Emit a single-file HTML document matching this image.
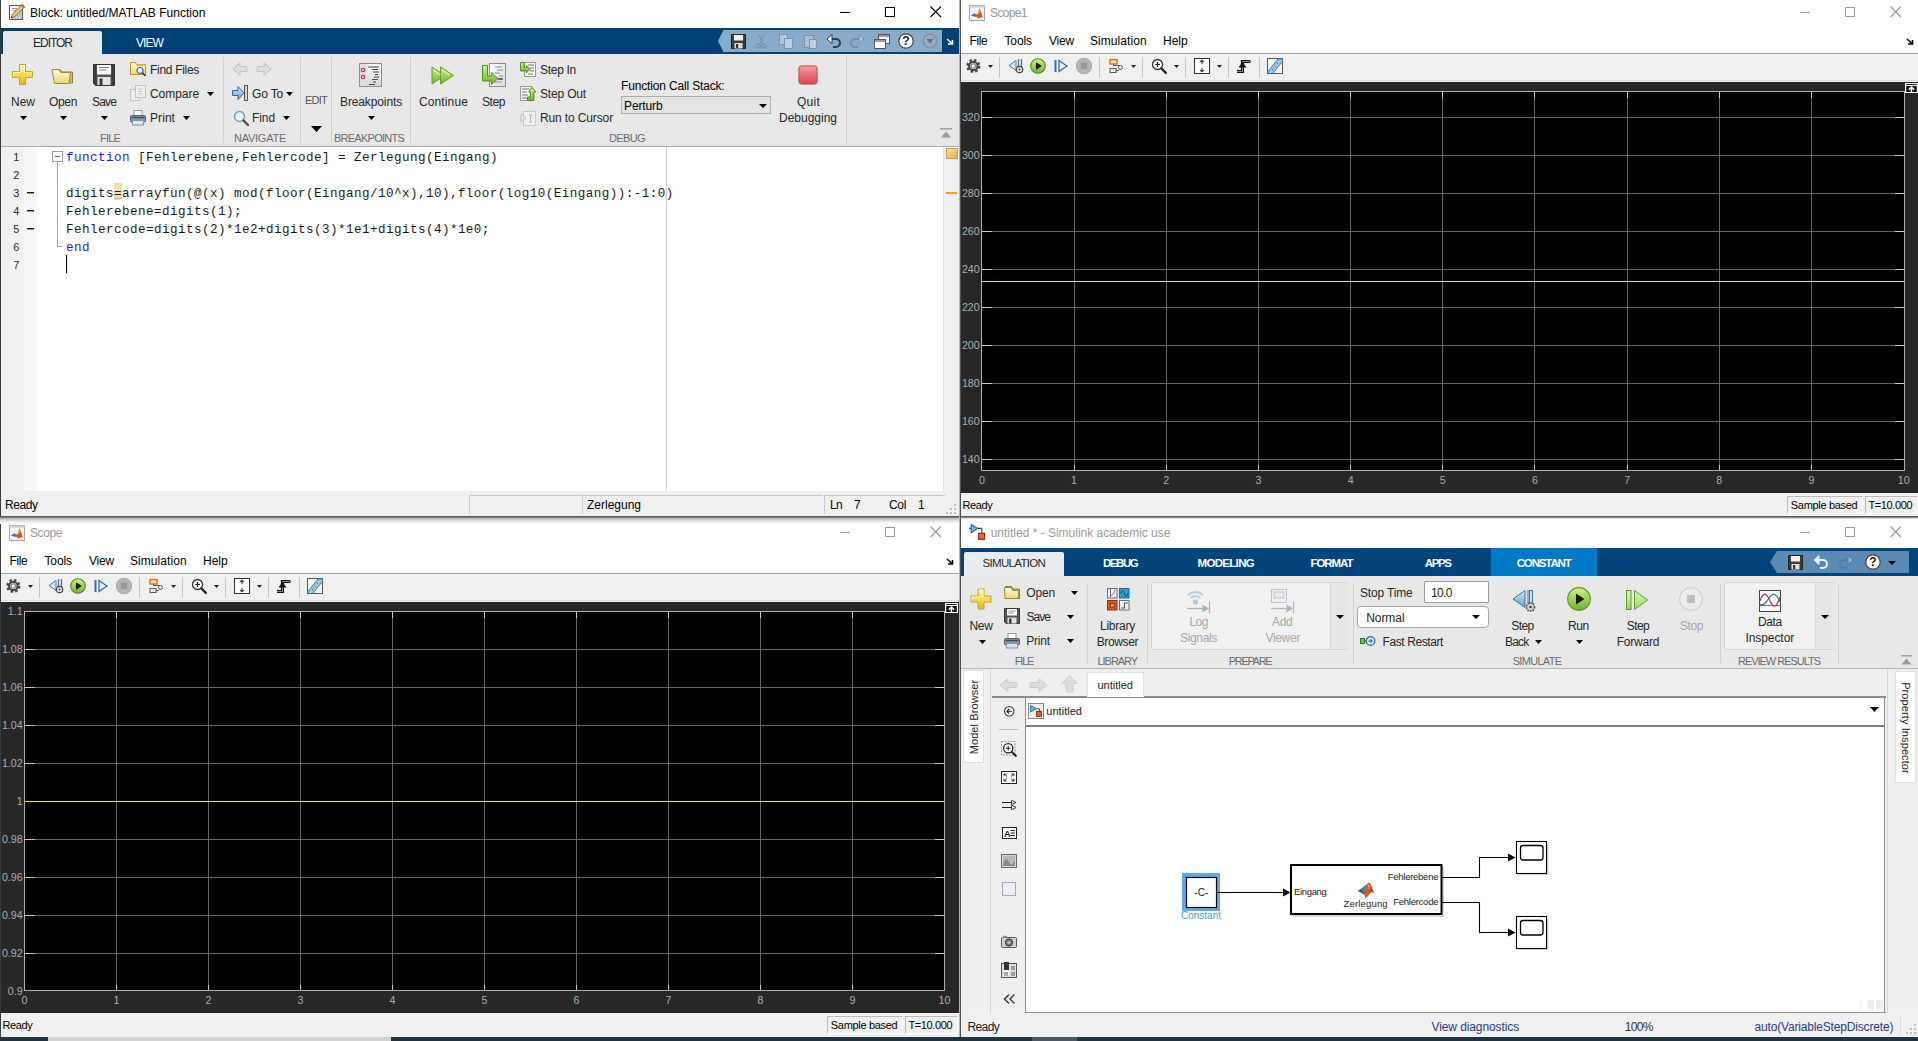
<!DOCTYPE html>
<html><head><meta charset="utf-8"><title>MATLAB / Simulink</title><style>
html,body{margin:0;padding:0;}
body{width:1918px;height:1041px;overflow:hidden;position:relative;background:#fff;font-family:"Liberation Sans",sans-serif;}
.t{position:absolute;white-space:nowrap;}
.r{position:absolute;}
.win{position:absolute;left:0;top:0;width:0;height:0;}
svg{overflow:visible;}
</style></head><body>
<svg width="0" height="0" style="position:absolute"><defs>
<linearGradient id="gY" x1="0" y1="0" x2="0" y2="1"><stop offset="0" stop-color="#fff6b0"/><stop offset="0.55" stop-color="#f7d94a"/><stop offset="1" stop-color="#e0b020"/></linearGradient>
<linearGradient id="gF" x1="0" y1="0" x2="0" y2="1"><stop offset="0" stop-color="#fffbe0"/><stop offset="1" stop-color="#f0d774"/></linearGradient>
<linearGradient id="gG" x1="0" y1="0" x2="0" y2="1"><stop offset="0" stop-color="#d4f08a"/><stop offset="1" stop-color="#6cb52c"/></linearGradient>
<linearGradient id="gR" x1="0" y1="0" x2="0" y2="1"><stop offset="0" stop-color="#f6a0a4"/><stop offset="1" stop-color="#d8484e"/></linearGradient>
<linearGradient id="gB" x1="0" y1="0" x2="0" y2="1"><stop offset="0" stop-color="#d6ecfb"/><stop offset="1" stop-color="#5a9fd4"/></linearGradient>
<linearGradient id="gS" x1="0" y1="0" x2="0" y2="1"><stop offset="0" stop-color="#e6e6e6"/><stop offset="1" stop-color="#bdbdbd"/></linearGradient>
<linearGradient id="gS2" x1="0" y1="0" x2="0" y2="1"><stop offset="0" stop-color="#f8f8f8"/><stop offset="1" stop-color="#d4d4d4"/></linearGradient>
<linearGradient id="gS3" x1="0" y1="0" x2="1" y2="1"><stop offset="0" stop-color="#ffffff"/><stop offset="1" stop-color="#d8dcdf"/></linearGradient>
<linearGradient id="gG2" x1="0" y1="0" x2="0" y2="1"><stop offset="0" stop-color="#e2f6c0"/><stop offset="1" stop-color="#9cd85c"/></linearGradient>
<linearGradient id="gP" x1="0" y1="0" x2="0" y2="1"><stop offset="0" stop-color="#f4f8fb"/><stop offset="1" stop-color="#b9c7d3"/></linearGradient>
</defs></svg>
<section class="win" id="scope-window">
<div class="r" style="left:0px;top:520px;width:959px;height:517px;background:#fff;"></div>
<svg class="r" style="left:9px;top:524.5px;" width="16" height="16" viewBox="0 0 16 16"><rect x=".5" y=".5" width="15" height="15" fill="#f2f4f8" stroke="#9aa3b0"/><rect x=".5" y=".5" width="15" height="2.2" fill="#c9d3e2"/><path d="M2 10.5l3.5-2 2.5 1.5 2.5-6.5c1 1 2.2 5.5 3.5 9.5-1.8-1.2-2.8-1-4 .8-1.5-1.8-3.5-2.8-8-3.3z" fill="#d8511f"/><path d="M8 10l2.5-6.5c.6.8 1 2 1.4 3.2z" fill="#f6a33a"/><path d="M2 10.5l3.5-2 2.5 1.5-1.8 2z" fill="#3e78b8"/></svg>
<div class="t" style="left:30px;top:524.6px;font-size:12px;line-height:17px;color:#999;letter-spacing:-0.41px;">Scope</div>
<div class="r" style="left:840px;top:532px;width:10px;height:1px;background:#999;"></div>
<div class="r" style="left:885px;top:527px;width:10px;height:10px;border:1px solid #999;box-sizing:border-box;"></div>
<svg class="r" style="left:930px;top:526px;" width="12" height="12" viewBox="0 0 12 12"><path d="M.5 .5l10.5 10.5M11 .5L.5 11" stroke="#999" stroke-width="1.1"/></svg>
<div class="t" style="left:9.5px;top:552.6px;font-size:12px;line-height:17px;color:#000;letter-spacing:-0.41px;">File</div>
<div class="t" style="left:44.4px;top:552.6px;font-size:12px;line-height:17px;color:#000;letter-spacing:-0.08px;">Tools</div>
<div class="t" style="left:89px;top:552.6px;font-size:12px;line-height:17px;color:#000;letter-spacing:-0.25px;">View</div>
<div class="t" style="left:130px;top:552.6px;font-size:12px;line-height:17px;color:#000;letter-spacing:0.06px;">Simulation</div>
<div class="t" style="left:203px;top:552.6px;font-size:12px;line-height:17px;color:#000;letter-spacing:-0.02px;">Help</div>
<svg class="r" style="left:946px;top:558px;" width="8" height="7" viewBox="0 0 8 7"><path d="M1 1l5 4.5M6.5 2v4h-4.5" stroke="#000" stroke-width="1.6" fill="none"/></svg>
<div class="r" style="left:1px;top:573px;width:958px;height:1px;background:#a0a0a0;"></div>
<div class="r" style="left:1px;top:574px;width:958px;height:27px;background:#f0f0f0;"></div>
<div class="r" style="left:1px;top:600px;width:958px;height:1px;background:#dcdcdc;"></div>
<div class="r" style="left:1px;top:601px;width:958px;height:1px;background:#fafafa;"></div>
<svg class="r" style="left:6px;top:578px;" width="16" height="16" viewBox="0 0 16 16"><circle cx="7.300" cy="8" r="5.900" fill="none" stroke="#4a4a4a" stroke-width="2.400" stroke-dasharray="2.500 2.130"/><circle cx="7.300" cy="8" r="4.300" fill="#cfcfcf" stroke="#444" stroke-width="2"/><circle cx="7.300" cy="8" r="2.200" fill="#f4f4f4" stroke="#555" stroke-width=".8"/></svg>
<svg class="r" style="left:48px;top:578px;" width="16" height="16" viewBox="0 0 16 16"><path d="M8 2.5l-7 5 7 5z" fill="#d4e6f4" stroke="#4b7aa6"/><path d="M10.5 1v9M13.5 1v9" stroke="#4b7aa6" stroke-width="1.4"/><circle cx="11.5" cy="11.5" r="3.2" fill="#e4e4e4" stroke="#444" stroke-width="1.2"/><circle cx="11.5" cy="11.5" r="1" fill="#444"/></svg>
<svg class="r" style="left:70px;top:578px;" width="16" height="16" viewBox="0 0 16 16"><circle cx="8" cy="8" r="7.3" fill="url(#gG)" stroke="#4b8b1c" stroke-width="1.1"/><path d="M6 4.2l6 3.8-6 3.8z" fill="#1f1f1f"/></svg>
<svg class="r" style="left:93px;top:578px;" width="16" height="16" viewBox="0 0 16 16"><path d="M2.5 2v12" stroke="#2f6fb0" stroke-width="2"/><path d="M6 2.5l8 5.5-8 5.5z" fill="#e6f0fa" stroke="#2f6fb0" stroke-width="1.3"/></svg>
<svg class="r" style="left:116px;top:578px;" width="16" height="16" viewBox="0 0 16 16"><rect x=".5" y=".5" width="15" height="15" rx="6.500" fill="#b5b5b5" stroke="#a8a8a8"/><rect x="4.800" y="4.800" width="6.400" height="6.400" fill="#989898"/></svg>
<svg class="r" style="left:148px;top:578px;" width="16" height="16" viewBox="0 0 16 16"><rect x="2" y="1.5" width="7" height="4.5" fill="#ffd9a8" stroke="#e06a10" stroke-width="1.3"/><rect x="2" y="10.5" width="6" height="4" fill="#fff" stroke="#555"/><path d="M5.5 6v1.5h6.5M8 12.5h3" stroke="#555" fill="none"/><circle cx="12.5" cy="9.5" r="2" fill="#fff" stroke="#555"/></svg>
<svg class="r" style="left:191px;top:578px;" width="16" height="16" viewBox="0 0 16 16"><circle cx="6.5" cy="6.5" r="5" fill="#fff" stroke="#333" stroke-width="1.3"/><path d="M4 6.5h5M6.5 4v5" stroke="#222" stroke-width="1.2"/><path d="M10.5 10.5l4.3 4.3" stroke="#222" stroke-width="2.4" stroke-linecap="round"/></svg>
<svg class="r" style="left:234px;top:578px;" width="16" height="16" viewBox="0 0 16 16"><rect x=".5" y=".5" width="15" height="15" fill="#fff" stroke="#333"/><path d="M8 2.2v4M6 4.2l2-2 2 2M8 13.8v-4M6 11.8l2 2 2-2" stroke="#333" fill="none" stroke-width="1.1"/></svg>
<svg class="r" style="left:276px;top:578px;" width="16" height="16" viewBox="0 0 16 16"><path d="M1 13.500h5.500v-10h8" fill="none" stroke="#111" stroke-width="3.200"/><path d="M1 13.500h5.500v-10h8" fill="none" stroke="#8e8e8e" stroke-width="1"/><path d="M2.500 9.500l4-5.500 4 5.500z" fill="#111"/></svg>
<svg class="r" style="left:307px;top:578px;" width="16" height="16" viewBox="0 0 16 16"><rect x=".5" y=".5" width="15" height="15" fill="#f4f4f4" stroke="#555"/><path d="M1 13.5l10-12.5h4.5v2.5l-10 12h-4.5z" fill="#9ccbe8" stroke="#3a78a8"/><path d="M5 11l1.2 1M7.5 8l1.2 1M10 5l1.2 1" stroke="#2b5f88"/></svg>
<svg class="r" style="left:28px;top:585px;" width="5" height="3" viewBox="0 0 5 3"><path d="M0 0H5L2.5 3Z" fill="#222"/></svg>
<svg class="r" style="left:171px;top:585px;" width="5" height="3" viewBox="0 0 5 3"><path d="M0 0H5L2.5 3Z" fill="#222"/></svg>
<svg class="r" style="left:214px;top:585px;" width="5" height="3" viewBox="0 0 5 3"><path d="M0 0H5L2.5 3Z" fill="#222"/></svg>
<svg class="r" style="left:257px;top:585px;" width="5" height="3" viewBox="0 0 5 3"><path d="M0 0H5L2.5 3Z" fill="#222"/></svg>
<div class="r" style="left:39px;top:577px;width:1px;height:21px;background:#c4c4c4;"></div>
<div class="r" style="left:139px;top:577px;width:1px;height:21px;background:#c4c4c4;"></div>
<div class="r" style="left:182px;top:577px;width:1px;height:21px;background:#c4c4c4;"></div>
<div class="r" style="left:225px;top:577px;width:1px;height:21px;background:#c4c4c4;"></div>
<div class="r" style="left:268px;top:577px;width:1px;height:21px;background:#c4c4c4;"></div>
<div class="r" style="left:299px;top:577px;width:1px;height:21px;background:#c4c4c4;"></div>
<div class="r" style="left:1px;top:602px;width:958px;height:411px;background:#272727;"></div>
<svg class="r" style="left:0;top:0" width="1918" height="1041" shape-rendering="crispEdges"><rect x="24.5" y="611.5" width="920" height="379" fill="#000"/><path d="M116.5 611.5V990.5M208.5 611.5V990.5M300.5 611.5V990.5M392.5 611.5V990.5M484.5 611.5V990.5M576.5 611.5V990.5M668.5 611.5V990.5M760.5 611.5V990.5M852.5 611.5V990.5M24.5 649.5H944.5M24.5 687.5H944.5M24.5 725.5H944.5M24.5 763.5H944.5M24.5 801.5H944.5M24.5 839.5H944.5M24.5 877.5H944.5M24.5 915.5H944.5M24.5 953.5H944.5" stroke="#666666" stroke-width="1" fill="none"/><path d="M116.5 611.5v6M116.5 990.5v-6M208.5 611.5v6M208.5 990.5v-6M300.5 611.5v6M300.5 990.5v-6M392.5 611.5v6M392.5 990.5v-6M484.5 611.5v6M484.5 990.5v-6M576.5 611.5v6M576.5 990.5v-6M668.5 611.5v6M668.5 990.5v-6M760.5 611.5v6M760.5 990.5v-6M852.5 611.5v6M852.5 990.5v-6M24.5 649.5h10M944.5 649.5h-10M24.5 687.5h10M944.5 687.5h-10M24.5 725.5h10M944.5 725.5h-10M24.5 763.5h10M944.5 763.5h-10M24.5 801.5h10M944.5 801.5h-10M24.5 839.5h10M944.5 839.5h-10M24.5 877.5h10M944.5 877.5h-10M24.5 915.5h10M944.5 915.5h-10M24.5 953.5h10M944.5 953.5h-10" stroke="#c8c8c8" stroke-width="1" fill="none"/><path d="M24.5 801.5H944.5" stroke="#e6e66a" stroke-width="1"/><rect x="24.5" y="611.5" width="920" height="379" fill="none" stroke="#afafaf" stroke-width="1"/></svg>
<div class="t" style="left:7.87px;top:604.3px;font-size:10.67px;line-height:15px;color:#afafaf;">1.1</div>
<div class="t" style="left:1.93px;top:642.3px;font-size:10.67px;line-height:15px;color:#afafaf;">1.08</div>
<div class="t" style="left:1.93px;top:680.3px;font-size:10.67px;line-height:15px;color:#afafaf;">1.06</div>
<div class="t" style="left:1.93px;top:718.3px;font-size:10.67px;line-height:15px;color:#afafaf;">1.04</div>
<div class="t" style="left:1.93px;top:756.3px;font-size:10.67px;line-height:15px;color:#afafaf;">1.02</div>
<div class="t" style="left:16.77px;top:794.3px;font-size:10.67px;line-height:15px;color:#afafaf;">1</div>
<div class="t" style="left:1.93px;top:832.3px;font-size:10.67px;line-height:15px;color:#afafaf;">0.98</div>
<div class="t" style="left:1.93px;top:870.3px;font-size:10.67px;line-height:15px;color:#afafaf;">0.96</div>
<div class="t" style="left:1.93px;top:908.3px;font-size:10.67px;line-height:15px;color:#afafaf;">0.94</div>
<div class="t" style="left:1.93px;top:946.3px;font-size:10.67px;line-height:15px;color:#afafaf;">0.92</div>
<div class="t" style="left:7.87px;top:984.3px;font-size:10.67px;line-height:15px;color:#afafaf;">0.9</div>
<div class="t" style="left:21.53px;top:992.8px;font-size:10.67px;line-height:15px;color:#afafaf;">0</div>
<div class="t" style="left:113.53px;top:992.8px;font-size:10.67px;line-height:15px;color:#afafaf;">1</div>
<div class="t" style="left:205.53px;top:992.8px;font-size:10.67px;line-height:15px;color:#afafaf;">2</div>
<div class="t" style="left:297.53px;top:992.8px;font-size:10.67px;line-height:15px;color:#afafaf;">3</div>
<div class="t" style="left:389.53px;top:992.8px;font-size:10.67px;line-height:15px;color:#afafaf;">4</div>
<div class="t" style="left:481.53px;top:992.8px;font-size:10.67px;line-height:15px;color:#afafaf;">5</div>
<div class="t" style="left:573.53px;top:992.8px;font-size:10.67px;line-height:15px;color:#afafaf;">6</div>
<div class="t" style="left:665.53px;top:992.8px;font-size:10.67px;line-height:15px;color:#afafaf;">7</div>
<div class="t" style="left:757.53px;top:992.8px;font-size:10.67px;line-height:15px;color:#afafaf;">8</div>
<div class="t" style="left:849.53px;top:992.8px;font-size:10.67px;line-height:15px;color:#afafaf;">9</div>
<div class="t" style="left:938.57px;top:992.8px;font-size:10.67px;line-height:15px;color:#afafaf;">10</div>
<svg class="r" style="left:945px;top:603px;" width="13" height="10" viewBox="0 0 13 10"><rect width="13" height="10" fill="#fff"/><rect x="1.2" y="1" width="10.6" height="1" fill="#222"/><rect x="1.2" y="3" width="10.6" height="6" fill="#111"/><path d="M6.5 4v5M3.800 6.800l2.700-2.800 2.700 2.800" stroke="#fff" stroke-width="1.4" fill="none"/></svg>
<div class="r" style="left:1px;top:1013px;width:958px;height:24px;background:#f0f0f0;"></div>
<div class="t" style="left:2.5px;top:1018.1px;font-size:11px;line-height:15px;color:#000;letter-spacing:-0.36px;">Ready</div>
<div class="r" style="left:827px;top:1016px;width:76px;height:18px;border-left:1px solid #bababa;border-top:1px solid #bababa;border-right:1px solid #fff;border-bottom:1px solid #fff;box-sizing:border-box;"></div>
<div class="r" style="left:905px;top:1016px;width:53px;height:18px;border-left:1px solid #bababa;border-top:1px solid #bababa;border-right:1px solid #fff;border-bottom:1px solid #fff;box-sizing:border-box;"></div>
<div class="t" style="left:830.8px;top:1018.1px;font-size:11px;line-height:15px;color:#000;letter-spacing:-0.31px;">Sample based</div>
<div class="t" style="left:908.4px;top:1018.1px;font-size:11px;line-height:15px;color:#000;letter-spacing:-0.35px;">T=10.000</div>
<div class="r" style="left:0px;top:519px;width:1px;height:518px;background:#3a3a3a;"></div>
<div class="r" style="left:0px;top:1037px;width:1918px;height:4px;background:#1f343e;"></div>
<div class="r" style="left:48px;top:1037px;width:343px;height:4px;background:#d2d2d2;"></div>
<div class="r" style="left:1032px;top:1037px;width:45px;height:4px;background:#4a5964;"></div>
</section>
<section class="win" id="simulink-window">
<div class="r" style="left:961px;top:519px;width:958px;height:518px;background:#fff;"></div>
<svg class="r" style="left:969px;top:524px;" width="16" height="16" viewBox="0 0 16 16"><path d="M0 4.400H2.200M8.600 4.400H12.800V9" fill="none" stroke="#1f4f6f" stroke-width="1.100"/><path d="M2.200 .5L8.800 4.400 2.200 8.600z" fill="#6cbce6" stroke="#1a5f8a" stroke-width="1.100" stroke-linejoin="round"/><rect x="9.600" y="9.300" width="6" height="6" fill="#e8682c" stroke="#7a2a0a" stroke-width="1.100"/></svg>
<div class="t" style="left:990.7px;top:525.1px;font-size:12px;line-height:17px;color:#999;letter-spacing:-0.01px;">untitled * - Simulink academic use</div>
<div class="r" style="left:1800px;top:532px;width:10px;height:1px;background:#999;"></div>
<div class="r" style="left:1845px;top:527px;width:10px;height:10px;border:1px solid #999;box-sizing:border-box;"></div>
<svg class="r" style="left:1890px;top:526px;" width="12" height="12" viewBox="0 0 12 12"><path d="M.5 .5l10.5 10.5M11 .5L.5 11" stroke="#999" stroke-width="1.1"/></svg>
<div class="r" style="left:961px;top:548px;width:957px;height:28px;background:#00447c;"></div>
<div class="r" style="left:964px;top:552px;width:100px;height:24px;background:#e9ecef;border-radius:2px 2px 0 0;"></div>
<div class="t" style="left:982.6px;top:554.9px;font-size:11.5px;line-height:16px;color:#2a2a2a;letter-spacing:-0.68px;">SIMULATION</div>
<div class="t" style="left:1102.9px;top:554.9px;font-size:11.5px;line-height:16px;color:#fff;letter-spacing:-1.43px;font-weight:700;">DEBUG</div>
<div class="t" style="left:1197.5px;top:554.9px;font-size:11.5px;line-height:16px;color:#fff;letter-spacing:-0.68px;font-weight:700;">MODELING</div>
<div class="t" style="left:1310.5px;top:554.9px;font-size:11.5px;line-height:16px;color:#fff;letter-spacing:-1.06px;font-weight:700;">FORMAT</div>
<div class="t" style="left:1424.7px;top:554.9px;font-size:11.5px;line-height:16px;color:#fff;letter-spacing:-1.35px;font-weight:700;">APPS</div>
<div class="r" style="left:1491px;top:548px;width:106px;height:28px;background:#0079c6;"></div>
<div class="t" style="left:1516.7px;top:554.9px;font-size:11.5px;line-height:16px;color:#fff;letter-spacing:-1.14px;font-weight:700;">CONSTANT</div>
<svg class="r" style="left:1770px;top:551px;" width="139" height="22" viewBox="0 0 139 22"><path d="M7 0h132v22h-132l-7-11z" fill="#5b8ab5"/></svg>
<svg class="r" style="left:1786.5px;top:554px;" width="16" height="16" viewBox="0 0 16 16"><path d="M1.5 1.5h14v14h-14z" fill="#3c3c3c" stroke="#222"/><rect x="4" y="2" width="9" height="5.5" fill="#f2f2f2"/><rect x="4.5" y="10" width="8" height="5.5" fill="#ddd"/><rect x="6" y="11" width="2.2" height="4" fill="#333"/></svg>
<svg class="r" style="left:1813px;top:554px;" width="16" height="16" viewBox="0 0 16 16"><path d="M2 6h8a4 4 0 0 1 0 8h-3" fill="none" stroke="#e8f0f8" stroke-width="2"/><path d="M6 1.5l-5 4.5 5 4.5z" fill="#e8f0f8" stroke="#e8f0f8"/></svg>
<svg class="r" style="left:1838px;top:554px;" width="16" height="16" viewBox="0 0 16 16"><g opacity=".4"><path d="M14 6h-8a4 4 0 0 0 0 8h3" fill="none" stroke="#4f6a85" stroke-width="2"/><path d="M10 1.5l5 4.5-5 4.5z" fill="#dfe7ee" stroke="#4f6a85"/></g></svg>
<svg class="r" style="left:1864.5px;top:554px;" width="16" height="16" viewBox="0 0 16 16"><circle cx="8" cy="8" r="7.2" fill="#fff" stroke="#444" stroke-width="1.2"/><text x="8" y="12.3" font-family="Liberation Sans,sans-serif" font-weight="700" font-size="12" text-anchor="middle" fill="#222">?</text></svg>
<svg class="r" style="left:1888px;top:560.5px;" width="8" height="4" viewBox="0 0 8 4"><path d="M0 0H8L4 4Z" fill="#000"/></svg>
<div class="r" style="left:961px;top:576px;width:957px;height:92px;background:#e8e8e8;"></div>
<div class="r" style="left:961px;top:668px;width:957px;height:1px;background:#b4b4b4;"></div>
<div class="r" style="left:1087px;top:584px;width:1px;height:80px;background:#d2d2d2;"></div>
<div class="r" style="left:1147px;top:584px;width:1px;height:80px;background:#d2d2d2;"></div>
<div class="r" style="left:1353px;top:584px;width:1px;height:80px;background:#d2d2d2;"></div>
<div class="r" style="left:1720px;top:584px;width:1px;height:80px;background:#d2d2d2;"></div>
<div class="r" style="left:1838px;top:584px;width:1px;height:80px;background:#d2d2d2;"></div>
<svg class="r" style="left:969.5px;top:587.5px;" width="23" height="22.5" viewBox="0.5 0.5 23 22.5"><path d="M8.5 1.5h6v7h7v6h-7v7h-6v-7h-7v-6h7z" fill="url(#gY)" stroke="#c9a21a" stroke-width="1" stroke-linejoin="round"/><path d="M9.500 2.500h4v7M2.500 13.500v-4h7" fill="none" stroke="#fffbe0" stroke-width="1" opacity=".9"/></svg>
<div class="t" style="left:969.5px;top:617.6px;font-size:12px;line-height:17px;color:#262626;letter-spacing:-0.34px;">New</div>
<svg class="r" style="left:978.5px;top:639.5px;" width="7" height="4" viewBox="0 0 7 4"><path d="M0 0H7L3.5 4Z" fill="#000"/></svg>
<svg class="r" style="left:1004px;top:586px;" width="16.5" height="13.5" viewBox="0 0 16.500 13.500"><path d="M1.500 .5h6l1.500 2.500h6.500v9.500h-14z" fill="#d8c068" stroke="#8a7a3a"/><path d="M.5 1.500h6.500l1.500 3h6.500l-1 8h-13z" fill="url(#gF)" stroke="#9a8840" stroke-linejoin="round"/></svg>
<div class="t" style="left:1026.2px;top:584.6px;font-size:12px;line-height:17px;color:#262626;letter-spacing:-0.14px;">Open</div>
<svg class="r" style="left:1070.5px;top:590.5px;" width="7" height="4" viewBox="0 0 7 4"><path d="M0 0H7L3.5 4Z" fill="#000"/></svg>
<svg class="r" style="left:1004px;top:608px;" width="16" height="16" viewBox="0 0 16 16"><path d="M.5 .5h15v15h-13.500l-1.500-1.500z" fill="#555" stroke="#333"/><rect x="3" y="1" width="10" height="6.500" fill="#fafafa"/><path d="M4.500 3h7M4.500 5h5" stroke="#8a8a8a" stroke-width=".9"/><rect x="3.500" y="9.500" width="9" height="6" fill="#e2e2e2"/><rect x="5" y="10.500" width="2.500" height="5" fill="#3c3c3c"/></svg>
<div class="t" style="left:1026.5px;top:608.6px;font-size:12px;line-height:17px;color:#262626;letter-spacing:-0.96px;">Save</div>
<svg class="r" style="left:1066.5px;top:614.5px;" width="7" height="4" viewBox="0 0 7 4"><path d="M0 0H7L3.5 4Z" fill="#000"/></svg>
<svg class="r" style="left:1004px;top:632.5px;" width="16" height="16" viewBox="0 0 16 16"><rect x="4" y=".5" width="8" height="5" fill="#fff" stroke="#999"/><rect x=".5" y="5.500" width="15" height="6.500" rx="1.200" fill="#8a98a6" stroke="#55626e"/><path d="M1.500 7.500h13" stroke="#3f4a55" stroke-width="1.400"/><rect x="2.500" y="10.500" width="11" height="4.500" fill="#d6eaf4" stroke="#7f95a6"/></svg>
<div class="t" style="left:1026.2px;top:632.6px;font-size:12px;line-height:17px;color:#262626;letter-spacing:-0.17px;">Print</div>
<svg class="r" style="left:1066.5px;top:638.5px;" width="7" height="4" viewBox="0 0 7 4"><path d="M0 0H7L3.5 4Z" fill="#000"/></svg>
<div class="t" style="left:1014.75px;top:654.1px;font-size:11px;line-height:15px;color:#6b6b6b;letter-spacing:-1.18px;">FILE</div>
<svg class="r" style="left:1106.5px;top:588px;" width="22.5" height="22.5" viewBox="0 0 22.5 22.5"><rect x=".5" y=".5" width="9.5" height="9.5" fill="#f0f0f4" stroke="#6a6a78"/><path d="M3.5 1v8M3 7.5c3 0 4-3 5-6" stroke="#6a6a78" fill="none"/><rect x="12.5" y=".5" width="9.5" height="9.5" fill="#2a9fd8" stroke="#1a6f9e"/><path d="M13.5 6c1.5-4 3-4 4 0s2.5 3 3.5-1" stroke="#0b4a70" fill="none"/><rect x=".5" y="12.5" width="9.5" height="9.5" fill="#e2521c" stroke="#9a3208"/><rect x="3.5" y="15.5" width="3.5" height="3.5" fill="#f7b24a" stroke="#7a2606" stroke-width=".8"/><rect x="12.5" y="12.5" width="9.5" height="9.5" fill="#f8f8fa" stroke="#6a6a78"/><path d="M14 20h3.5v-5h3.5" stroke="#555" fill="none" stroke-width="1.2"/></svg>
<div class="t" style="left:1100px;top:617.6px;font-size:12px;line-height:17px;color:#262626;letter-spacing:-0.24px;">Library</div>
<div class="t" style="left:1096.65px;top:633.6px;font-size:12px;line-height:17px;color:#262626;letter-spacing:-0.36px;">Browser</div>
<div class="t" style="left:1097.55px;top:654.1px;font-size:11px;line-height:15px;color:#6b6b6b;letter-spacing:-1.05px;">LIBRARY</div>
<div class="r" style="left:1151px;top:582px;width:198px;height:68px;background:#f1f1f1;border:1px solid #d2d2d2;border-radius:3px;box-sizing:border-box;"></div>
<div class="r" style="left:1330px;top:583px;width:18px;height:66px;background:#e6e6e6;border-left:1px solid #d8d8d8;border-radius:0 3px 3px 0;"></div>
<svg class="r" style="left:1335.5px;top:614.5px;" width="8" height="4" viewBox="0 0 8 4"><path d="M0 0H8L4 4Z" fill="#000"/></svg>
<svg class="r" style="left:1186px;top:589px;" width="24" height="24" viewBox="0 0 24 24"><g opacity=".75"><circle cx="9.500" cy="13" r="2.600" fill="#9cbcd4"/><path d="M4.900 9a6.500 6.500 0 0 1 9.200 0M2 6.200a10.500 10.500 0 0 1 15 0" stroke="#a8c4d8" stroke-width="2" fill="none"/><path d="M1 19.500h17" stroke="#9a9a9a" stroke-width="1.300"/><path d="M16.500 15.500l6.500 4-6.500 4z" fill="#9a9a9a"/><path d="M23.500 12.500v12" stroke="#9a9a9a" stroke-width="1.200"/></g></svg>
<div class="t" style="left:1189.45px;top:614.1px;font-size:12px;line-height:17px;color:#a6a6a6;letter-spacing:-0.51px;">Log</div>
<div class="t" style="left:1180px;top:630.1px;font-size:12px;line-height:17px;color:#a6a6a6;letter-spacing:-0.34px;">Signals</div>
<svg class="r" style="left:1270px;top:589px;" width="24" height="24" viewBox="0 0 24 24"><g opacity=".7"><rect x="1.500" y=".5" width="15" height="13" fill="#eef2f6" stroke="#a4b0bc"/><rect x="4" y="3" width="10" height="6" fill="#dfe7ee" stroke="#a4b0bc"/><path d="M1 19.500h17" stroke="#9a9a9a" stroke-width="1.300"/><path d="M16.500 15.500l6.500 4-6.500 4z" fill="#9a9a9a"/><path d="M23.500 12.500v12" stroke="#9a9a9a" stroke-width="1.200"/></g></svg>
<div class="t" style="left:1271.95px;top:614.1px;font-size:12px;line-height:17px;color:#a6a6a6;letter-spacing:-0.28px;">Add</div>
<div class="t" style="left:1265.45px;top:630.1px;font-size:12px;line-height:17px;color:#a6a6a6;letter-spacing:-0.33px;">Viewer</div>
<div class="t" style="left:1228.75px;top:654.1px;font-size:11px;line-height:15px;color:#6b6b6b;letter-spacing:-1.32px;">PREPARE</div>
<div class="t" style="left:1360px;top:584.6px;font-size:12px;line-height:17px;color:#262626;letter-spacing:-0.17px;">Stop Time</div>
<div class="r" style="left:1424px;top:581px;width:65px;height:22px;background:#fff;border:1px solid #9a9a9a;border-radius:1px;box-sizing:border-box;"></div>
<div class="t" style="left:1431px;top:584.6px;font-size:12px;line-height:17px;color:#262626;letter-spacing:-0.64px;">10.0</div>
<div class="r" style="left:1357px;top:606px;width:132px;height:22px;background:#fff;border:1px solid #a4a4a4;border-radius:4px;box-sizing:border-box;"></div>
<div class="t" style="left:1366.2px;top:609.6px;font-size:12px;line-height:17px;color:#262626;letter-spacing:-0.06px;">Normal</div>
<svg class="r" style="left:1472px;top:614.5px;" width="8" height="4" viewBox="0 0 8 4"><path d="M0 0H8L4 4Z" fill="#000"/></svg>
<svg class="r" style="left:1360px;top:636px;" width="15" height="10" viewBox="0 0 15 10"><rect x=".5" y="2.5" width="4" height="5" fill="#6cc04a" stroke="#2f7a1a"/><path d="M5 5h3" stroke="#333"/><circle cx="10.5" cy="5" r="4.3" fill="#cfe6f7" stroke="#2a6aa0" stroke-width="1.2"/><path d="M8.5 5h3.5M10.5 3.2l1.8 1.8-1.8 1.8" stroke="#1b4f7c" fill="none"/></svg>
<div class="t" style="left:1382.5px;top:633.6px;font-size:12px;line-height:17px;color:#262626;letter-spacing:-0.4px;">Fast Restart</div>
<svg class="r" style="left:1511.5px;top:588.5px;" width="24" height="23" viewBox="0 0 24 23"><path d="M13 1.5l-12 8.5 12 8.5z" fill="url(#gB)" stroke="#3a76ad" stroke-linejoin="round"/><path d="M16 1v16" stroke="#3a76ad" stroke-width="1"/><rect x="17.5" y="1.5" width="3" height="15" fill="#cfe2f3" stroke="#3a76ad"/><circle cx="18.5" cy="18" r="4" fill="#d8d8d8" stroke="#444" stroke-width="1.6" stroke-dasharray="1.6 1"/><circle cx="18.5" cy="18" r="1.3" fill="#444"/></svg>
<div class="t" style="left:1511.25px;top:617.6px;font-size:12px;line-height:17px;color:#262626;letter-spacing:-0.55px;">Step</div>
<div class="t" style="left:1505px;top:633.6px;font-size:12px;line-height:17px;color:#262626;letter-spacing:-0.79px;">Back</div>
<svg class="r" style="left:1535.2px;top:639.5px;" width="7" height="4" viewBox="0 0 7 4"><path d="M0 0H7L3.5 4Z" fill="#000"/></svg>
<svg class="r" style="left:1566.5px;top:587px;" width="24" height="24" viewBox="0 0 24 24"><circle cx="12" cy="12" r="11.3" fill="url(#gG)" stroke="#5a9e22" stroke-width="1.2"/><path d="M9 6.5l8.5 5.5-8.5 5.5z" fill="#1a1a1a"/></svg>
<div class="t" style="left:1568.05px;top:617.6px;font-size:12px;line-height:17px;color:#262626;letter-spacing:-0.5px;">Run</div>
<svg class="r" style="left:1575.5px;top:639.5px;" width="7" height="4" viewBox="0 0 7 4"><path d="M0 0H7L3.5 4Z" fill="#000"/></svg>
<svg class="r" style="left:1626px;top:589px;" width="22" height="22" viewBox="0 0 22 22"><rect x=".5" y="1.500" width="4.500" height="19" fill="url(#gG2)" stroke="#5a9a2a"/><path d="M8.500 1.500l13 9.500-13 9.500z" fill="url(#gG2)" stroke="#5a9a2a" stroke-linejoin="round"/></svg>
<div class="t" style="left:1626.75px;top:617.6px;font-size:12px;line-height:17px;color:#262626;letter-spacing:-0.55px;">Step</div>
<div class="t" style="left:1616.75px;top:633.6px;font-size:12px;line-height:17px;color:#262626;letter-spacing:-0.22px;">Forward</div>
<svg class="r" style="left:1679px;top:587px;" width="24" height="24" viewBox="0 0 24 24"><circle cx="12" cy="12" r="11.3" fill="#ececec" stroke="#d0d0d0" stroke-width="1.2"/><rect x="8" y="8" width="8" height="8" fill="#bdbdbd"/></svg>
<div class="t" style="left:1680px;top:617.6px;font-size:12px;line-height:17px;color:#a6a6a6;letter-spacing:-0.42px;">Stop</div>
<div class="t" style="left:1512.65px;top:654.1px;font-size:11px;line-height:15px;color:#6b6b6b;letter-spacing:-0.69px;">SIMULATE</div>
<div class="r" style="left:1724px;top:582px;width:111px;height:68px;background:#f1f1f1;border:1px solid #d2d2d2;border-radius:3px;box-sizing:border-box;"></div>
<div class="r" style="left:1815px;top:583px;width:19px;height:66px;background:#e6e6e6;border-left:1px solid #d8d8d8;border-radius:0 3px 3px 0;"></div>
<svg class="r" style="left:1820.5px;top:614.5px;" width="8" height="4" viewBox="0 0 8 4"><path d="M0 0H8L4 4Z" fill="#000"/></svg>
<svg class="r" style="left:1758.5px;top:590px;" width="22" height="22" viewBox="0 0 22 22"><rect x=".5" y=".5" width="21" height="21" fill="#fbfbfb" stroke="#444"/><path d="M.5 15.5h21" stroke="#777"/><path d="M1 11c3-9 6-9 10 0s7 5 10-4" stroke="#d83a4a" fill="none" stroke-width="1.3"/><path d="M1 14c3 2 6-1 9-6s7-6 11 4" stroke="#2a7fb8" fill="none" stroke-width="1.3"/></svg>
<div class="t" style="left:1757.95px;top:614.1px;font-size:12px;line-height:17px;color:#262626;letter-spacing:-0.41px;">Data</div>
<div class="t" style="left:1745.45px;top:630.1px;font-size:12px;line-height:17px;color:#262626;letter-spacing:-0.07px;">Inspector</div>
<div class="t" style="left:1738px;top:654.1px;font-size:11px;line-height:15px;color:#6b6b6b;letter-spacing:-1.03px;">REVIEW RESULTS</div>
<svg class="r" style="left:1901px;top:655px;" width="11" height="10" viewBox="0 0 11 10"><path d="M0 .8h11" stroke="#9a9a9a" stroke-width="1.4"/><path d="M.5 9.500h10l-5-6z" fill="#9a9a9a"/></svg>
<div class="r" style="left:961px;top:669px;width:957px;height:344px;background:#efefef;"></div>
<div class="r" style="left:990px;top:669px;width:1px;height:344px;background:#d4d4d4;"></div>
<div class="r" style="left:963px;top:670px;width:21px;height:93px;background:#fff;border:1px solid #e0e0e0;box-sizing:border-box;"></div>
<div class="t" style="left:967.5px;top:757px;font-size:11px;line-height:13px;width:80px;text-align:center;color:#222;transform:rotate(-90deg);transform-origin:0 0;letter-spacing:.1px;">Model Browser</div>
<svg class="r" style="left:998.5px;top:678px;" width="19" height="14" viewBox="0 0 19 14"><path d="M1 7l8-6.5v4h9v5h-9v4z" fill="#dcdcdc" stroke="#cfcfcf"/></svg>
<svg class="r" style="left:1028.5px;top:678px;" width="19" height="14" viewBox="0 0 19 14"><path d="M18 7l-8-6.5v4h-9v5h9v4z" fill="#dcdcdc" stroke="#cfcfcf"/></svg>
<svg class="r" style="left:1061px;top:675px;" width="17" height="17.5" viewBox="0 0 17 17.5"><path d="M8.5 .5l8 8h-4.5v8.5h-7v-8.5h-4.5z" fill="#dcdcdc" stroke="#cfcfcf"/></svg>
<div class="r" style="left:1087px;top:672px;width:57px;height:25px;background:#fff;border:1px solid #e2e2e2;border-bottom:none;box-sizing:border-box;"></div>
<div class="t" style="left:1097.5px;top:678.1px;font-size:11px;line-height:15px;color:#222;letter-spacing:0px;">untitled</div>
<div class="r" style="left:992px;top:696px;width:894px;height:2px;background:#8c8c8c;"></div>
<div class="r" style="left:1087px;top:696px;width:57px;height:1px;background:#fff;"></div>
<div class="r" style="left:1026px;top:698px;width:859px;height:27px;background:#fff;"></div>
<div class="r" style="left:1025px;top:698px;width:1px;height:315px;background:#8c8c8c;"></div>
<div class="r" style="left:1026px;top:725px;width:859px;height:2px;background:#7d7d7d;"></div>
<svg class="r" style="left:1028px;top:703px;" width="16" height="16" viewBox="0 0 16 16"><rect x=".5" y=".5" width="15" height="15" fill="#f2ede8" stroke="#8a8a8a"/><path d="M2.5 2.5l6 3.2-6 3.2z" fill="#6cb4e0" stroke="#1f6fa8" stroke-width=".9" stroke-linejoin="round"/><path d="M8.5 5.8h3v3" fill="none" stroke="#444" stroke-width=".9"/><rect x="8.5" y="8.5" width="5" height="5" fill="#e0602a" stroke="#8a300c" stroke-width=".9"/></svg>
<div class="t" style="left:1046.3px;top:704.4px;font-size:11px;line-height:15px;color:#222;letter-spacing:0.03px;">untitled</div>
<svg class="r" style="left:1869.5px;top:707px;" width="9" height="5" viewBox="0 0 9 5"><path d="M0 0H9L4.5 5Z" fill="#000"/></svg>
<svg class="r" style="left:1003.5px;top:706px;" width="10.5" height="10.5" viewBox="0 0 10 10"><circle cx="5" cy="5" r="4.5" fill="#fff" stroke="#333"/><path d="M7.5 5h-4.5M5 2.8l-2.2 2.2 2.2 2.2" stroke="#222" fill="none" stroke-width="1.1"/></svg>
<div class="r" style="left:999px;top:729px;width:19px;height:1px;background:#bdbdbd;"></div>
<svg class="r" style="left:1001px;top:741px;" width="16" height="16" viewBox="0 0 15.5 15.500"><rect x=".5" y=".5" width="13" height="13" fill="none" stroke="#888" stroke-dasharray="1.5 1.5"/><circle cx="7" cy="7" r="4.5" fill="#fff" stroke="#222" stroke-width="1.2"/><path d="M4.8 7h4.4M7 4.8v4.4" stroke="#222"/><path d="M10.3 10.3l4.7 4.7" stroke="#222" stroke-width="2"/></svg>
<svg class="r" style="left:1001px;top:770.5px;" width="16" height="13" viewBox="0 0 16 13"><rect x=".5" y=".5" width="15" height="12" fill="#fff" stroke="#222"/><path d="M3 3l3 2.5M3 3h2.5M3 3v2.2M13 3l-3 2.5M13 3h-2.5M13 3v2.2M3 10l3-2.5M3 10h2.5M3 10v-2.2M13 10l-3-2.5M13 10h-2.5M13 10v-2.2" stroke="#222" fill="none" stroke-width=".9"/></svg>
<svg class="r" style="left:1001.5px;top:800px;" width="14" height="10" viewBox="0 0 14 10"><path d="M0 2.5h12M0 7.5h12" stroke="#222" stroke-width="1.1"/><path d="M9.5 .3l4.5 2.2-4.5 2.2zM9.5 5.3l4.5 2.2-4.5 2.2z" fill="#fff" stroke="#222" stroke-width=".9"/></svg>
<svg class="r" style="left:1002px;top:827px;" width="15" height="12" viewBox="0 0 15 12"><rect x=".5" y=".5" width="14" height="11" fill="#fff" stroke="#222"/><text x="2" y="9.5" font-family="Liberation Sans,sans-serif" font-weight="700" font-size="9" fill="#111">A</text><path d="M8.5 3.5h4.5M8.5 6h4.5M8.5 8.500h4.500" stroke="#222"/></svg>
<svg class="r" style="left:1001px;top:854px;" width="16" height="14" viewBox="0 0 16 14"><rect x=".5" y=".5" width="15" height="13" fill="#d8d8d8" stroke="#666"/><rect x="2" y="2" width="12" height="10" fill="#b8b8b8"/><path d="M2 10c2-6 4-6 6-2s4 3 6-2v6h-12z" fill="#8a8a8a"/></svg>
<svg class="r" style="left:1002px;top:882px;" width="14" height="14" viewBox="0 0 14 14"><rect x=".5" y=".5" width="13" height="13" fill="#ececfb" stroke="#a8a8b4"/></svg>
<svg class="r" style="left:1001px;top:935px;" width="16" height="13" viewBox="0 0 16 13"><rect x=".5" y="2.5" width="15" height="10" rx="1" fill="#d0d0d0" stroke="#555"/><rect x="2" y=".8" width="4" height="2" fill="#888"/><circle cx="8" cy="7.5" r="3.6" fill="#777" stroke="#333"/><circle cx="8" cy="7.5" r="1.6" fill="#bbb"/></svg>
<svg class="r" style="left:1001px;top:962px;" width="16" height="16" viewBox="0 0 16 16"><rect x=".5" y="1.5" width="15" height="14" fill="#e0e0e0" stroke="#555"/><rect x="3" y="0" width="5" height="8" fill="#333"/><rect x="3" y="8" width="5" height="5" fill="#fff"/><rect x="10" y="4" width="4" height="4" fill="#999"/><rect x="10" y="10" width="4" height="4" fill="#999"/><rect x="3" y="10" width="4" height="4" fill="#aaa"/></svg>
<svg class="r" style="left:1004px;top:994px;" width="11" height="10" viewBox="0 0 11 10"><path d="M5 .5l-4.5 4.5 4.5 4.5M10.500 .5l-4.500 4.500 4.500 4.500" stroke="#333" fill="none" stroke-width="1.4"/></svg>
<div class="r" style="left:1026px;top:727px;width:859px;height:285px;background:#fff;"></div>
<div class="r" style="left:1026px;top:1012px;width:860px;height:1px;background:#8c8c8c;"></div>
<div class="r" style="left:1884px;top:698px;width:1px;height:315px;background:#8c8c8c;"></div>
<div class="r" style="left:1887px;top:669px;width:1px;height:344px;background:#d4d4d4;"></div>
<svg class="r" style="left:1860px;top:1000px;" width="24" height="10" viewBox="0 0 24 10"><g fill="#ededed"><rect x="0" y="0" width="1" height="10"/><rect x="8" y="0" width="6" height="10"/><rect x="16" y="0" width="7" height="10"/></g></svg>
<div class="r" style="left:1895px;top:671px;width:21px;height:112px;background:#fff;border:1px solid #e0e0e0;box-sizing:border-box;"></div>
<div class="t" style="left:1912px;top:677.5px;font-size:11px;line-height:13px;width:100px;text-align:center;color:#222;transform:rotate(90deg);transform-origin:0 0;letter-spacing:.1px;">Property Inspector</div>
<svg class="r" style="left:0;top:0" width="1918" height="1041"><rect x="1182" y="873" width="38" height="38" fill="#5aaaf0"/><rect x="1186.500" y="877.500" width="30" height="30" fill="#fff" stroke="#000" stroke-width="1.2"/><path d="M1217 892.500H1284" stroke="#000" stroke-width="1.1"/><path d="M1283 888.500l7.500 4-7.500 4z" fill="#000"/><rect x="1293" y="867" width="151" height="50" fill="#c8c8c8" opacity=".7"/><rect x="1291" y="865" width="150.500" height="49" fill="#fff" stroke="#000" stroke-width="2"/><path d="M1442 877.500H1479.500V857.500H1509M1442 902.500H1479.500V932.500H1509" stroke="#000" stroke-width="1.1" fill="none"/><path d="M1508 853.500l7.500 4-7.500 4zM1508 928.500l7.500 4-7.500 4z" fill="#000"/><rect x="1518.500" y="843" width="30" height="32" fill="#c4c4c4" opacity=".7"/><rect x="1516.500" y="841.5" width="30" height="32" fill="#fff" stroke="#000" stroke-width="1.1"/><rect x="1520.500" y="845.5" width="22.500" height="14.500" rx="2.500" fill="#fff" stroke="#000" stroke-width="1.3"/><rect x="1518.500" y="918" width="30" height="32" fill="#c4c4c4" opacity=".7"/><rect x="1516.500" y="916.5" width="30" height="32" fill="#fff" stroke="#000" stroke-width="1.1"/><rect x="1520.500" y="920.5" width="22.500" height="14.500" rx="2.500" fill="#fff" stroke="#000" stroke-width="1.3"/></svg>
<svg class="r" style="left:1358px;top:881.5px;" width="17" height="17" viewBox="0 0 17 17"><path d="M0 9L8.500 2.500 10.200 1 6 12.300z" fill="#3f86a8"/><path d="M0 9l3-2.200 3.500 4.500-1 .7z" fill="#2f5f86"/><path d="M5.500 12L10 1C11 0 12 .5 12.500 2 14 6 15 9.500 16 11 14 9.500 13 10 11.500 12 10 14 9 15.500 7.200 16.300 7 14.500 6.500 13 5.500 12z" fill="#d9571e"/><path d="M10.500 1.500C11.500 3 11.800 5 11.500 7.500L10.200 5z" fill="#f8b090"/><path d="M12.500 2C14 6 15 9.500 16 11 14.500 10 13.800 9.500 13 10z" fill="#a6420f"/></svg>
<div class="t" style="left:1194.36px;top:885.9px;font-size:10px;line-height:14px;color:#111;">-C-</div>
<div class="t" style="left:1181px;top:909.4px;font-size:10px;line-height:14px;color:#4a9be4;letter-spacing:0px;">Constant</div>
<div class="t" style="left:1294px;top:884.9px;font-size:9.5px;line-height:13px;color:#222;letter-spacing:-0.34px;">Eingang</div>
<div class="t" style="left:1343.5px;top:897.1px;font-size:9.5px;line-height:13px;color:#222;letter-spacing:0.17px;">Zerlegung</div>
<div class="t" style="left:1387.7px;top:870.1px;font-size:9.5px;line-height:13px;color:#222;letter-spacing:-0.26px;">Fehlerebene</div>
<div class="t" style="left:1393.2px;top:895.3px;font-size:9.5px;line-height:13px;color:#222;letter-spacing:-0.25px;">Fehlercode</div>
<div class="r" style="left:961px;top:1013px;width:957px;height:24px;background:#f0f0f0;"></div>
<div class="t" style="left:967.4px;top:1019.1px;font-size:12px;line-height:17px;color:#222;letter-spacing:-0.58px;">Ready</div>
<div class="t" style="left:1431.5px;top:1019.1px;font-size:12px;line-height:17px;color:#2b3c86;letter-spacing:-0.1px;">View diagnostics</div>
<div class="t" style="left:1624.7px;top:1019.1px;font-size:12px;line-height:17px;color:#333;letter-spacing:-0.65px;">100%</div>
<div class="t" style="left:1754.5px;top:1019.1px;font-size:12px;line-height:17px;color:#2b3c86;letter-spacing:-0.17px;">auto(VariableStepDiscrete)</div>
<div class="r" style="left:1900px;top:1016px;width:1px;height:18px;background:#dcdcdc;"></div>
<svg class="r" style="left:1906px;top:1024px;" width="12" height="12" viewBox="0 0 12 12"><g fill="#bdbdbd"><rect x="8" y="0" width="2" height="2"/><rect x="4" y="4" width="2" height="2"/><rect x="8" y="4" width="2" height="2"/><rect x="0" y="8" width="2" height="2"/><rect x="4" y="8" width="2" height="2"/><rect x="8" y="8" width="2" height="2"/></g></svg>
</section>
<section class="win" id="matlab-function-editor">
<div class="r" style="left:0px;top:0px;width:959px;height:517px;background:#fff;"></div>
<div class="r" style="left:0px;top:0px;width:1px;height:517px;background:#3a3a3a;"></div>
<svg class="r" style="left:9px;top:4px;" width="16" height="16" viewBox="0 0 16 16"><rect x=".5" y="1.500" width="13" height="14" fill="#fff" stroke="#555"/><path d="M13 5v10h-11z" fill="#b9cadb"/><path d="M3 4.500h5M4.500 6.500h3" stroke="#8a8a8a" stroke-width=".9"/><path d="M2 14l1.300-3.800 9.500-9.500 2.500 2.500-9.500 9.500z" fill="#f2b957" stroke="#8a5a1c" stroke-width=".8"/><path d="M12 1.500l2.500 2.500 1.300-1.300-2.500-2.500z" fill="#e2686c" stroke="#9a3c3c" stroke-width=".6"/><path d="M2 14l.6-1.800 1.200 1.200z" fill="#222"/><path d="M4.600 11.600l8-8" stroke="#fde9b0" stroke-width=".8"/></svg>
<div class="t" style="left:30px;top:4.6px;font-size:12px;line-height:17px;color:#000;letter-spacing:0.03px;">Block: untitled/MATLAB Function</div>
<div class="r" style="left:840px;top:12px;width:10px;height:1px;background:#000;"></div>
<div class="r" style="left:885px;top:7px;width:10px;height:10px;border:1px solid #000;box-sizing:border-box;"></div>
<svg class="r" style="left:930px;top:6px;" width="12" height="12" viewBox="0 0 12 12"><path d="M.5 .5l10.5 10.5M11 .5L.5 11" stroke="#000" stroke-width="1.1"/></svg>
<div class="r" style="left:1px;top:28px;width:958px;height:26px;background:#004174;"></div>
<div class="r" style="left:3px;top:31px;width:99px;height:24px;background:#e8e8e8;border-radius:2px 2px 0 0;"></div>
<div class="t" style="left:33px;top:35.1px;font-size:12px;line-height:17px;color:#2a2a2a;letter-spacing:-1.02px;">EDITOR</div>
<div class="t" style="left:136px;top:35.1px;font-size:12px;line-height:17px;color:#fff;letter-spacing:-0.92px;">VIEW</div>
<svg class="r" style="left:718px;top:30px;" width="224" height="22" viewBox="0 0 224 22"><path d="M5.500 0h218.500v22h-218.500l-5.500-11z" fill="#8aaac9"/></svg>
<svg class="r" style="left:730px;top:33px;" width="16" height="16" viewBox="0 0 16 16"><path d="M1.5 1.5h14v14h-14z" fill="#3c3c3c" stroke="#222"/><rect x="4" y="2" width="9" height="5.5" fill="#f2f2f2"/><rect x="4.5" y="10" width="8" height="5.5" fill="#ddd"/><rect x="6" y="11" width="2.2" height="4" fill="#333"/></svg>
<svg class="r" style="left:753px;top:33px;" width="16" height="16" viewBox="0 0 16 16"><g opacity=".45" stroke="#6b7f92" fill="none" stroke-width="1.3"><path d="M6 1l4 10M11 1l-4 10"/><circle cx="5.5" cy="13" r="2"/><circle cx="11" cy="13" r="2"/></g></svg>
<svg class="r" style="left:778px;top:33px;" width="16" height="16" viewBox="0 0 16 16"><g opacity=".5"><rect x="1.5" y="1.5" width="8" height="10" fill="#dfe7ee" stroke="#6b7f92"/><rect x="6.5" y="5.5" width="8" height="10" fill="#eef2f6" stroke="#6b7f92"/></g></svg>
<svg class="r" style="left:802px;top:33px;" width="16" height="16" viewBox="0 0 16 16"><g opacity=".5"><rect x="2.5" y="2.5" width="9" height="12" fill="#cfd9e2" stroke="#6b7f92"/><rect x="7.5" y="6.5" width="7" height="9" fill="#eef2f6" stroke="#6b7f92"/></g></svg>
<svg class="r" style="left:826px;top:33px;" width="16" height="16" viewBox="0 0 16 16"><path d="M2 6h8a4 4 0 0 1 0 8h-3" fill="none" stroke="#1f3f5f" stroke-width="2"/><path d="M6 1.5l-5 4.5 5 4.5z" fill="#fff" stroke="#1f3f5f"/></svg>
<svg class="r" style="left:849px;top:33px;" width="16" height="16" viewBox="0 0 16 16"><g opacity=".4"><path d="M14 6h-8a4 4 0 0 0 0 8h3" fill="none" stroke="#4f6a85" stroke-width="2"/><path d="M10 1.5l5 4.5-5 4.5z" fill="#dfe7ee" stroke="#4f6a85"/></g></svg>
<svg class="r" style="left:874px;top:33px;" width="16" height="16" viewBox="0 0 16 16"><rect x="4.500" y="1.500" width="11" height="9" fill="#f4f4f4" stroke="#555"/><rect x="5" y="2" width="10" height="2" fill="#9a9a9a"/><rect x=".5" y="6.500" width="11" height="9" fill="#fff" stroke="#555"/><rect x="1" y="7" width="10" height="2" fill="#9a9a9a"/></svg>
<svg class="r" style="left:898px;top:33px;" width="16" height="16" viewBox="0 0 16 16"><circle cx="8" cy="8" r="7.2" fill="#fff" stroke="#444" stroke-width="1.2"/><text x="8" y="12.3" font-family="Liberation Sans,sans-serif" font-weight="700" font-size="12" text-anchor="middle" fill="#222">?</text></svg>
<svg class="r" style="left:922px;top:33px;" width="16" height="16" viewBox="0 0 16 16"><circle cx="8" cy="8" r="6.800" fill="#97a9ba" stroke="#7b8ea1" stroke-width="1.200"/><path d="M4.500 6h7l-3.500 5z" fill="#5f7183"/></svg>
<svg class="r" style="left:946px;top:38px;" width="8" height="7" viewBox="0 0 8 7"><path d="M1 1l5 4.5M6.5 2v4h-4.5" stroke="#fff" stroke-width="1.6" fill="none"/></svg>
<div class="r" style="left:1px;top:54px;width:958px;height:92px;background:#e8e8e8;"></div>
<div class="r" style="left:1px;top:146px;width:958px;height:1px;background:#a9a9a9;"></div>
<div class="r" style="left:223px;top:57px;width:1px;height:86px;background:#d0d0d0;"></div>
<div class="r" style="left:300px;top:57px;width:1px;height:86px;background:#d0d0d0;"></div>
<div class="r" style="left:331px;top:57px;width:1px;height:86px;background:#d0d0d0;"></div>
<div class="r" style="left:410px;top:57px;width:1px;height:86px;background:#d0d0d0;"></div>
<div class="r" style="left:846px;top:57px;width:1px;height:86px;background:#d0d0d0;"></div>
<svg class="r" style="left:11px;top:63px;" width="24" height="24" viewBox="0 0 24 24"><path d="M8.5 1.5h6v7h7v6h-7v7h-6v-7h-7v-6h7z" fill="url(#gY)" stroke="#c9a21a" stroke-width="1" stroke-linejoin="round"/><path d="M9.500 2.500h4v7M2.500 13.500v-4h7" fill="none" stroke="#fffbe0" stroke-width="1" opacity=".9"/></svg>
<div class="t" style="left:11px;top:93.6px;font-size:12px;line-height:17px;color:#262626;letter-spacing:0px;">New</div>
<svg class="r" style="left:20px;top:115.5px;" width="7" height="4" viewBox="0 0 7 4"><path d="M0 0H7L3.5 4Z" fill="#000"/></svg>
<svg class="r" style="left:51px;top:63px;" width="24" height="24" viewBox="0 0 24 24"><path d="M2.500 6.500h6.500l2 2.500h10.500v11h-17z" fill="#d9bc5a" stroke="#8f7a36"/><path d="M1 6.500h7l1.800 3h9.700l-1.500 11h-14.500z" fill="url(#gF)" stroke="#a08a40" stroke-linejoin="round"/></svg>
<div class="t" style="left:49px;top:93.6px;font-size:12px;line-height:17px;color:#262626;letter-spacing:-0.34px;">Open</div>
<svg class="r" style="left:60px;top:115.5px;" width="7" height="4" viewBox="0 0 7 4"><path d="M0 0H7L3.5 4Z" fill="#000"/></svg>
<svg class="r" style="left:92px;top:63px;" width="24" height="24" viewBox="0 0 24 24"><path d="M1.500 1.500h21v21h-19l-2-2z" fill="#555" stroke="#333"/><path d="M2 2h2.500v20h-1.500l-1-1zM19.500 2h2.500v20h-2.500z" fill="#3c3c3c"/><rect x="5" y="2" width="14" height="9.500" fill="#fafafa"/><path d="M7 4.500h10M7 7h7" stroke="#8a8a8a"/><rect x="5.500" y="14" width="13" height="8" fill="#e2e2e2"/><rect x="7.500" y="15.500" width="3" height="6.500" fill="#3c3c3c"/></svg>
<div class="t" style="left:92px;top:93.6px;font-size:12px;line-height:17px;color:#262626;letter-spacing:-0.84px;">Save</div>
<svg class="r" style="left:101px;top:115.5px;" width="7" height="4" viewBox="0 0 7 4"><path d="M0 0H7L3.5 4Z" fill="#000"/></svg>
<svg class="r" style="left:130px;top:61px;" width="16" height="16" viewBox="0 0 16 16"><path d="M.5 1.500h5l1 2h9v10h-15z" fill="url(#gF)" stroke="#b8922c"/><path d="M6.500 3.500h9v1.800h-9z" fill="#f0c060"/><circle cx="10" cy="9.500" r="3" fill="#e6f2fb" stroke="#3f6f9a" stroke-width="1.200"/><path d="M12.300 11.800l3.200 3.200" stroke="#333" stroke-width="1.600"/></svg>
<div class="t" style="left:150px;top:62.1px;font-size:12px;line-height:17px;color:#262626;letter-spacing:-0.3px;">Find Files</div>
<svg class="r" style="left:130px;top:85px;" width="16" height="16" viewBox="0 0 16 16"><g opacity=".45"><rect x=".5" y="4.5" width="9" height="11" fill="#f4f4f4" stroke="#999"/><rect x="5.5" y=".5" width="10" height="12" fill="#fafafa" stroke="#999"/><path d="M8 4h5M8 6.5h4M8 9h5" stroke="#999"/></g></svg>
<div class="t" style="left:150px;top:86.1px;font-size:12px;line-height:17px;color:#262626;letter-spacing:-0.05px;">Compare</div>
<svg class="r" style="left:207px;top:91.5px;" width="7" height="4" viewBox="0 0 7 4"><path d="M0 0H7L3.5 4Z" fill="#000"/></svg>
<svg class="r" style="left:130px;top:110px;" width="16" height="16" viewBox="0 0 16 16"><rect x="4" y=".5" width="8" height="5" fill="#fff" stroke="#999"/><rect x=".5" y="5.500" width="15" height="6.500" rx="1.200" fill="#8a98a6" stroke="#55626e"/><path d="M1.500 7.500h13" stroke="#3f4a55" stroke-width="1.400"/><rect x="2.500" y="10.500" width="11" height="4.500" fill="#d6eaf4" stroke="#7f95a6"/></svg>
<div class="t" style="left:150px;top:110.1px;font-size:12px;line-height:17px;color:#262626;letter-spacing:0.07px;">Print</div>
<svg class="r" style="left:183px;top:115.5px;" width="7" height="4" viewBox="0 0 7 4"><path d="M0 0H7L3.5 4Z" fill="#000"/></svg>
<div class="t" style="left:100px;top:131.1px;font-size:11px;line-height:15px;color:#6b6b6b;letter-spacing:-0.81px;">FILE</div>
<svg class="r" style="left:232px;top:61px;" width="16" height="16" viewBox="0 0 16 16"><path d="M1 8l7-6.5v4h7v5h-7v4z" fill="#dedede" stroke="#c4c4c4"/></svg>
<svg class="r" style="left:256px;top:61px;" width="16" height="16" viewBox="0 0 16 16"><path d="M15 8l-7-6.5v4h-7v5h7v4z" fill="#dedede" stroke="#c4c4c4"/></svg>
<svg class="r" style="left:232px;top:85px;" width="16" height="16" viewBox="0 0 16 16"><path d="M.5 5.500h5.500v-4l6 6.500-6 6.500v-4h-5.500z" fill="url(#gB)" stroke="#2a6aa0" stroke-linejoin="round"/><rect x="12.500" y=".5" width="3" height="15" fill="#cfd6dc" stroke="#555"/></svg>
<div class="t" style="left:252px;top:86.1px;font-size:12px;line-height:17px;color:#262626;letter-spacing:-0.16px;">Go To</div>
<svg class="r" style="left:286px;top:91.5px;" width="7" height="4" viewBox="0 0 7 4"><path d="M0 0H7L3.5 4Z" fill="#000"/></svg>
<svg class="r" style="left:233px;top:110px;" width="16" height="16" viewBox="0 0 16 16"><circle cx="6.5" cy="6.5" r="5" fill="#e8f3fb" stroke="#7d9cb8" stroke-width="1.5"/><path d="M10.5 10.5l4.5 4.5" stroke="#444" stroke-width="2.2" stroke-linecap="round"/></svg>
<div class="t" style="left:252px;top:110.1px;font-size:12px;line-height:17px;color:#262626;letter-spacing:-0.09px;">Find</div>
<svg class="r" style="left:283px;top:115.5px;" width="7" height="4" viewBox="0 0 7 4"><path d="M0 0H7L3.5 4Z" fill="#000"/></svg>
<div class="t" style="left:234px;top:131.1px;font-size:11px;line-height:15px;color:#6b6b6b;letter-spacing:-0.25px;">NAVIGATE</div>
<div class="t" style="left:305px;top:92.6px;font-size:11px;line-height:15px;color:#555;letter-spacing:-0.76px;">EDIT</div>
<svg class="r" style="left:311px;top:125.5px;" width="11" height="6" viewBox="0 0 11 6"><path d="M0 0H11L5.5 6Z" fill="#000"/></svg>
<svg class="r" style="left:358px;top:63px;" width="25" height="24" viewBox="0 0 25 24"><rect x="1.500" y=".5" width="22" height="23" fill="url(#gS2)" stroke="#8e8e8e"/><rect x="2" y="1" width="6" height="22" fill="#dedede"/><circle cx="5" cy="7" r="1.700" fill="#f6d6d8" stroke="#c8283a" stroke-width="1.100"/><circle cx="5" cy="14" r="1.700" fill="#f6d6d8" stroke="#c8283a" stroke-width="1.100"/><path d="M10 4h11M14 6.500h6M15 9h6M17 11.500h3M16 14h5M14 16.500h6M15 19h3M11 21.500h6" stroke="#4a4a4a" stroke-width="1"/></svg>
<div class="t" style="left:340px;top:93.6px;font-size:12px;line-height:17px;color:#262626;letter-spacing:-0.12px;">Breakpoints</div>
<svg class="r" style="left:368px;top:115.5px;" width="7" height="4" viewBox="0 0 7 4"><path d="M0 0H7L3.5 4Z" fill="#000"/></svg>
<div class="t" style="left:334px;top:131.1px;font-size:11px;line-height:15px;color:#6b6b6b;letter-spacing:-0.75px;">BREAKPOINTS</div>
<svg class="r" style="left:431px;top:64px;" width="24" height="24" viewBox="0 0 24 24"><path d="M1 3l12.500 8.500-12.500 8.500z" fill="url(#gG)" stroke="#5aa226" stroke-linejoin="round"/><path d="M9.500 3l13 8.500-13 8.500z" fill="url(#gG)" stroke="#5aa226" stroke-linejoin="round"/><path d="M2.500 6l7 5M11 6l7.500 5" stroke="#e8f8c0" stroke-width="1.200" fill="none" opacity=".8"/></svg>
<div class="t" style="left:419px;top:93.6px;font-size:12px;line-height:17px;color:#262626;letter-spacing:0.12px;">Continue</div>
<svg class="r" style="left:481px;top:63px;" width="26" height="24" viewBox="0 0 26 24"><rect x="8.500" y=".5" width="16" height="23" fill="url(#gS3)" stroke="#8e8e8e"/><path d="M14 4h7M16 7h6M14 10h5M18 13h4M14 19h7" stroke="#8a8a8a"/><path d="M17 16h5" stroke="#333" stroke-width="1.400"/><path d="M1.500 2.500h5v10.500h4v-3.500l6.500 6-6.500 6v-3.500h-9z" fill="url(#gG)" stroke="#4a9420" stroke-linejoin="round"/></svg>
<div class="t" style="left:482px;top:93.6px;font-size:12px;line-height:17px;color:#262626;letter-spacing:-0.42px;">Step</div>
<svg class="r" style="left:520px;top:61px;" width="16" height="16" viewBox="0 0 16 16"><rect x="4.5" y="1.5" width="11" height="14" fill="#f6f6f6" stroke="#999"/><path d="M8 4h6M10 7h4M10 10h4M8 13h5" stroke="#777"/><path d="M.5 1.5h3.5v5h2.5v-2l3.5 3.7-3.5 3.7v-2h-6z" fill="url(#gG)" stroke="#3f8a1a" stroke-width=".9"/></svg>
<div class="t" style="left:540px;top:62.1px;font-size:12px;line-height:17px;color:#262626;letter-spacing:-0.29px;">Step In</div>
<svg class="r" style="left:520px;top:85px;" width="16" height="16" viewBox="0 0 16 16"><rect x=".5" y="1.5" width="11" height="14" fill="#f6f6f6" stroke="#999"/><path d="M2 4h7M2 7h5M2 10h6M2 13h5" stroke="#777"/><path d="M7.5 15.5v-3.5h3v-5h-2l3.7-4.5 3.7 4.5h-2v8.5z" fill="url(#gG)" stroke="#3f8a1a" stroke-width=".9"/></svg>
<div class="t" style="left:540px;top:86.1px;font-size:12px;line-height:17px;color:#262626;letter-spacing:-0.17px;">Step Out</div>
<svg class="r" style="left:520px;top:110px;" width="16" height="16" viewBox="0 0 16 16"><g opacity=".5"><rect x="3.5" y="1.5" width="12" height="14" fill="#f8f8f8" stroke="#aaa"/><path d="M1 4l5 4-5 4z" fill="#eee" stroke="#999"/><path d="M9 5h3M10.5 5v7M9 12h3" stroke="#888"/></g></svg>
<div class="t" style="left:540px;top:110.1px;font-size:12px;line-height:17px;color:#262626;letter-spacing:-0.13px;">Run to Cursor</div>
<div class="t" style="left:621px;top:78.1px;font-size:12px;line-height:17px;color:#000;letter-spacing:-0.16px;">Function Call Stack:</div>
<div class="r" style="left:621px;top:96px;width:150px;height:18px;background:#e4e4e4;border:1px solid #adadad;box-sizing:border-box;"></div>
<div class="t" style="left:624px;top:97.6px;font-size:12px;line-height:17px;color:#000;letter-spacing:-0.12px;">Perturb</div>
<svg class="r" style="left:758.5px;top:103.5px;" width="8" height="4" viewBox="0 0 8 4"><path d="M0 0H8L4 4Z" fill="#000"/></svg>
<svg class="r" style="left:798px;top:65px;" width="20" height="20" viewBox="0 0 22 22"><rect x="1" y="1" width="20" height="20" rx="3" fill="url(#gR)" stroke="#c23a40"/></svg>
<div class="t" style="left:797px;top:93.6px;font-size:12px;line-height:17px;color:#262626;letter-spacing:0.25px;">Quit</div>
<div class="t" style="left:779px;top:109.6px;font-size:12px;line-height:17px;color:#262626;letter-spacing:-0.01px;">Debugging</div>
<div class="t" style="left:609px;top:131.1px;font-size:11px;line-height:15px;color:#6b6b6b;letter-spacing:-0.62px;">DEBUG</div>
<svg class="r" style="left:940px;top:128px;" width="12" height="10" viewBox="0 0 12 10"><path d="M0 .8h12" stroke="#9a9a9a" stroke-width="1.4"/><path d="M1 9.5h10l-5-6z" fill="#9a9a9a"/></svg>
<div class="r" style="left:1px;top:147px;width:36px;height:344px;background:#f1f1f1;"></div>
<div class="r" style="left:37px;top:147px;width:906px;height:344px;background:#fff;"></div>
<div class="r" style="left:943px;top:147px;width:16px;height:344px;background:#f0f0f0;"></div>
<div class="r" style="left:943px;top:147px;width:1px;height:344px;background:#e0e0e0;"></div>
<div class="r" style="left:666px;top:147px;width:1px;height:344px;background:#cfcfcf;"></div>
<div class="r" style="left:24px;top:147px;width:13px;height:344px;background:#f6f6f6;"></div>
<div class="t" style="left:13.2px;top:150.1px;font-size:11px;line-height:15px;color:#2a2a2a;">1</div>
<div class="t" style="left:13.2px;top:168.1px;font-size:11px;line-height:15px;color:#2a2a2a;">2</div>
<div class="t" style="left:13.2px;top:186.1px;font-size:11px;line-height:15px;color:#2a2a2a;">3</div>
<div class="t" style="left:13.2px;top:204.1px;font-size:11px;line-height:15px;color:#2a2a2a;">4</div>
<div class="t" style="left:13.2px;top:222.1px;font-size:11px;line-height:15px;color:#2a2a2a;">5</div>
<div class="t" style="left:13.2px;top:240.1px;font-size:11px;line-height:15px;color:#2a2a2a;">6</div>
<div class="t" style="left:13.2px;top:258.1px;font-size:11px;line-height:15px;color:#2a2a2a;">7</div>
<div class="r" style="left:27px;top:192px;width:7px;height:1px;background:#111;"></div>
<div class="r" style="left:27px;top:193px;width:7px;height:1px;background:#9a9a9a;"></div>
<div class="r" style="left:27px;top:210px;width:7px;height:1px;background:#111;"></div>
<div class="r" style="left:27px;top:211px;width:7px;height:1px;background:#9a9a9a;"></div>
<div class="r" style="left:27px;top:228px;width:7px;height:1px;background:#111;"></div>
<div class="r" style="left:27px;top:229px;width:7px;height:1px;background:#9a9a9a;"></div>
<div class="r" style="left:52px;top:151px;width:11px;height:11px;background:#fff;border:1px solid #9c9c9c;box-sizing:border-box;"></div>
<div class="r" style="left:55px;top:156px;width:5px;height:1px;background:#666;"></div>
<div class="r" style="left:57px;top:162px;width:1px;height:85px;background:#a6a6a6;"></div>
<div class="r" style="left:57px;top:246px;width:5px;height:1px;background:#a6a6a6;"></div>
<div class="r" style="left:114px;top:183px;width:8px;height:17px;background:#f3dfae;"></div>
<svg class="r" style="left:114px;top:197px;" width="8" height="3" viewBox="0 0 8 3"><path d="M0 .5q2 3 4 0q2 3 4 0" stroke="#e8a23a" fill="none"/></svg>
<div class="t" style="left:66px;top:148.6px;font-size:12.6px;line-height:18px;color:#1a1aff;font-family:'Liberation Mono',monospace;white-space:pre;letter-spacing:0.44px;">function</div>
<div class="t" style="left:130px;top:148.6px;font-size:12.6px;line-height:18px;color:#1a1a1a;font-family:'Liberation Mono',monospace;white-space:pre;letter-spacing:0.44px;"> [Fehlerebene,Fehlercode] = Zerlegung(Eingang)</div>
<div class="t" style="left:66px;top:184.6px;font-size:12.6px;line-height:18px;color:#1a1a1a;font-family:'Liberation Mono',monospace;white-space:pre;letter-spacing:0.44px;">digits=arrayfun(@(x) mod(floor(Eingang/10^x),10),floor(log10(Eingang)):-1:0)</div>
<div class="t" style="left:66px;top:202.6px;font-size:12.6px;line-height:18px;color:#1a1a1a;font-family:'Liberation Mono',monospace;white-space:pre;letter-spacing:0.44px;">Fehlerebene=digits(1);</div>
<div class="t" style="left:66px;top:220.6px;font-size:12.6px;line-height:18px;color:#1a1a1a;font-family:'Liberation Mono',monospace;white-space:pre;letter-spacing:0.44px;">Fehlercode=digits(2)*1e2+digits(3)*1e1+digits(4)*1e0;</div>
<div class="t" style="left:66px;top:238.6px;font-size:12.6px;line-height:18px;color:#1a1aff;font-family:'Liberation Mono',monospace;white-space:pre;letter-spacing:0.44px;">end</div>
<div class="r" style="left:66px;top:255px;width:1px;height:18px;background:#000;"></div>
<div class="r" style="left:946px;top:148px;width:12px;height:11px;background:linear-gradient(135deg,#ffe0a8,#f5a83c);border:1px solid #d99a4a;box-sizing:border-box;"></div>
<div class="r" style="left:946px;top:192px;width:11px;height:2px;background:#f59a1f;"></div>
<div class="r" style="left:1px;top:491px;width:958px;height:26px;background:#f0f0f0;"></div>
<div class="t" style="left:5px;top:497.1px;font-size:12px;line-height:17px;color:#000;letter-spacing:-0.44px;">Ready</div>
<div class="r" style="left:469px;top:495px;width:112px;height:19px;border-left:1px solid #c8c8c8;border-top:1px solid #c8c8c8;box-sizing:border-box;"></div>
<div class="r" style="left:582px;top:495px;width:241px;height:19px;border-left:1px solid #c8c8c8;border-top:1px solid #c8c8c8;box-sizing:border-box;"></div>
<div class="r" style="left:824px;top:495px;width:121px;height:19px;border-left:1px solid #c8c8c8;border-top:1px solid #c8c8c8;box-sizing:border-box;"></div>
<div class="t" style="left:587px;top:497.1px;font-size:12px;line-height:17px;color:#000;letter-spacing:0px;">Zerlegung</div>
<div class="t" style="left:830px;top:497.1px;font-size:12px;line-height:17px;color:#000;letter-spacing:-0.67px;">Ln</div>
<div class="t" style="left:854px;top:497.1px;font-size:12px;line-height:17px;color:#000;">7</div>
<div class="t" style="left:889px;top:497.1px;font-size:12px;line-height:17px;color:#000;letter-spacing:-0.34px;">Col</div>
<div class="t" style="left:918px;top:497.1px;font-size:12px;line-height:17px;color:#000;">1</div>
<svg class="r" style="left:946px;top:504px;" width="12" height="12" viewBox="0 0 12 12"><g fill="#bdbdbd"><rect x="8" y="0" width="2" height="2"/><rect x="4" y="4" width="2" height="2"/><rect x="8" y="4" width="2" height="2"/><rect x="0" y="8" width="2" height="2"/><rect x="4" y="8" width="2" height="2"/><rect x="8" y="8" width="2" height="2"/></g></svg>
<div class="r" style="left:0px;top:516px;width:959px;height:1px;background:#585858;"></div>
<div class="r" style="left:0px;top:517px;width:959px;height:1px;background:#808080;"></div>
<div class="r" style="left:0px;top:518px;width:959px;height:6px;background:linear-gradient(#b0b0b0,#d6d6d6 35%,#f0f0f0 70%,#fff);"></div>
</section>
<section class="win" id="scope1-window">
<div class="r" style="left:960px;top:0px;width:959px;height:517px;background:#fff;"></div>
<svg class="r" style="left:969px;top:4.5px;" width="16" height="16" viewBox="0 0 16 16"><rect x=".5" y=".5" width="15" height="15" fill="#f2f4f8" stroke="#9aa3b0"/><rect x=".5" y=".5" width="15" height="2.2" fill="#c9d3e2"/><path d="M2 10.5l3.5-2 2.5 1.5 2.5-6.5c1 1 2.2 5.5 3.5 9.5-1.8-1.2-2.8-1-4 .8-1.5-1.8-3.5-2.8-8-3.3z" fill="#d8511f"/><path d="M8 10l2.5-6.5c.6.8 1 2 1.4 3.2z" fill="#f6a33a"/><path d="M2 10.5l3.5-2 2.5 1.5-1.8 2z" fill="#3e78b8"/></svg>
<div class="t" style="left:990px;top:4.6px;font-size:12px;line-height:17px;color:#999;letter-spacing:-0.62px;">Scope1</div>
<div class="r" style="left:1800px;top:12px;width:10px;height:1px;background:#999;"></div>
<div class="r" style="left:1845px;top:7px;width:10px;height:10px;border:1px solid #999;box-sizing:border-box;"></div>
<svg class="r" style="left:1890px;top:6px;" width="12" height="12" viewBox="0 0 12 12"><path d="M.5 .5l10.5 10.5M11 .5L.5 11" stroke="#999" stroke-width="1.1"/></svg>
<div class="t" style="left:969.5px;top:32.6px;font-size:12px;line-height:17px;color:#000;letter-spacing:-0.41px;">File</div>
<div class="t" style="left:1004.4px;top:32.6px;font-size:12px;line-height:17px;color:#000;letter-spacing:-0.08px;">Tools</div>
<div class="t" style="left:1049px;top:32.6px;font-size:12px;line-height:17px;color:#000;letter-spacing:-0.25px;">View</div>
<div class="t" style="left:1090px;top:32.6px;font-size:12px;line-height:17px;color:#000;letter-spacing:0.06px;">Simulation</div>
<div class="t" style="left:1163px;top:32.6px;font-size:12px;line-height:17px;color:#000;letter-spacing:-0.02px;">Help</div>
<svg class="r" style="left:1906px;top:38px;" width="8" height="7" viewBox="0 0 8 7"><path d="M1 1l5 4.5M6.5 2v4h-4.5" stroke="#000" stroke-width="1.6" fill="none"/></svg>
<div class="r" style="left:961px;top:53px;width:958px;height:1px;background:#a0a0a0;"></div>
<div class="r" style="left:961px;top:54px;width:958px;height:27px;background:#f0f0f0;"></div>
<div class="r" style="left:961px;top:80px;width:958px;height:1px;background:#dcdcdc;"></div>
<div class="r" style="left:961px;top:81px;width:958px;height:1px;background:#fafafa;"></div>
<svg class="r" style="left:966px;top:58px;" width="16" height="16" viewBox="0 0 16 16"><circle cx="7.300" cy="8" r="5.900" fill="none" stroke="#4a4a4a" stroke-width="2.400" stroke-dasharray="2.500 2.130"/><circle cx="7.300" cy="8" r="4.300" fill="#cfcfcf" stroke="#444" stroke-width="2"/><circle cx="7.300" cy="8" r="2.200" fill="#f4f4f4" stroke="#555" stroke-width=".8"/></svg>
<svg class="r" style="left:1008px;top:58px;" width="16" height="16" viewBox="0 0 16 16"><path d="M8 2.5l-7 5 7 5z" fill="#d4e6f4" stroke="#4b7aa6"/><path d="M10.5 1v9M13.5 1v9" stroke="#4b7aa6" stroke-width="1.4"/><circle cx="11.5" cy="11.5" r="3.2" fill="#e4e4e4" stroke="#444" stroke-width="1.2"/><circle cx="11.5" cy="11.5" r="1" fill="#444"/></svg>
<svg class="r" style="left:1030px;top:58px;" width="16" height="16" viewBox="0 0 16 16"><circle cx="8" cy="8" r="7.3" fill="url(#gG)" stroke="#4b8b1c" stroke-width="1.1"/><path d="M6 4.2l6 3.8-6 3.8z" fill="#1f1f1f"/></svg>
<svg class="r" style="left:1053px;top:58px;" width="16" height="16" viewBox="0 0 16 16"><path d="M2.5 2v12" stroke="#2f6fb0" stroke-width="2"/><path d="M6 2.5l8 5.5-8 5.5z" fill="#e6f0fa" stroke="#2f6fb0" stroke-width="1.3"/></svg>
<svg class="r" style="left:1076px;top:58px;" width="16" height="16" viewBox="0 0 16 16"><rect x=".5" y=".5" width="15" height="15" rx="6.500" fill="#b5b5b5" stroke="#a8a8a8"/><rect x="4.800" y="4.800" width="6.400" height="6.400" fill="#989898"/></svg>
<svg class="r" style="left:1108px;top:58px;" width="16" height="16" viewBox="0 0 16 16"><rect x="2" y="1.5" width="7" height="4.5" fill="#ffd9a8" stroke="#e06a10" stroke-width="1.3"/><rect x="2" y="10.5" width="6" height="4" fill="#fff" stroke="#555"/><path d="M5.5 6v1.5h6.5M8 12.5h3" stroke="#555" fill="none"/><circle cx="12.5" cy="9.5" r="2" fill="#fff" stroke="#555"/></svg>
<svg class="r" style="left:1151px;top:58px;" width="16" height="16" viewBox="0 0 16 16"><circle cx="6.5" cy="6.5" r="5" fill="#fff" stroke="#333" stroke-width="1.3"/><path d="M4 6.5h5M6.5 4v5" stroke="#222" stroke-width="1.2"/><path d="M10.5 10.5l4.3 4.3" stroke="#222" stroke-width="2.4" stroke-linecap="round"/></svg>
<svg class="r" style="left:1194px;top:58px;" width="16" height="16" viewBox="0 0 16 16"><rect x=".5" y=".5" width="15" height="15" fill="#fff" stroke="#333"/><path d="M8 2.2v4M6 4.2l2-2 2 2M8 13.8v-4M6 11.8l2 2 2-2" stroke="#333" fill="none" stroke-width="1.1"/></svg>
<svg class="r" style="left:1236px;top:58px;" width="16" height="16" viewBox="0 0 16 16"><path d="M1 13.500h5.500v-10h8" fill="none" stroke="#111" stroke-width="3.200"/><path d="M1 13.500h5.500v-10h8" fill="none" stroke="#8e8e8e" stroke-width="1"/><path d="M2.500 9.500l4-5.500 4 5.500z" fill="#111"/></svg>
<svg class="r" style="left:1267px;top:58px;" width="16" height="16" viewBox="0 0 16 16"><rect x=".5" y=".5" width="15" height="15" fill="#f4f4f4" stroke="#555"/><path d="M1 13.5l10-12.5h4.5v2.5l-10 12h-4.5z" fill="#9ccbe8" stroke="#3a78a8"/><path d="M5 11l1.2 1M7.5 8l1.2 1M10 5l1.2 1" stroke="#2b5f88"/></svg>
<svg class="r" style="left:988px;top:65px;" width="5" height="3" viewBox="0 0 5 3"><path d="M0 0H5L2.5 3Z" fill="#222"/></svg>
<svg class="r" style="left:1131px;top:65px;" width="5" height="3" viewBox="0 0 5 3"><path d="M0 0H5L2.5 3Z" fill="#222"/></svg>
<svg class="r" style="left:1174px;top:65px;" width="5" height="3" viewBox="0 0 5 3"><path d="M0 0H5L2.5 3Z" fill="#222"/></svg>
<svg class="r" style="left:1217px;top:65px;" width="5" height="3" viewBox="0 0 5 3"><path d="M0 0H5L2.5 3Z" fill="#222"/></svg>
<div class="r" style="left:999px;top:57px;width:1px;height:21px;background:#c4c4c4;"></div>
<div class="r" style="left:1099px;top:57px;width:1px;height:21px;background:#c4c4c4;"></div>
<div class="r" style="left:1142px;top:57px;width:1px;height:21px;background:#c4c4c4;"></div>
<div class="r" style="left:1185px;top:57px;width:1px;height:21px;background:#c4c4c4;"></div>
<div class="r" style="left:1228px;top:57px;width:1px;height:21px;background:#c4c4c4;"></div>
<div class="r" style="left:1259px;top:57px;width:1px;height:21px;background:#c4c4c4;"></div>
<div class="r" style="left:961px;top:82px;width:958px;height:411px;background:#272727;"></div>
<svg class="r" style="left:0;top:0" width="1918" height="1041" shape-rendering="crispEdges"><rect x="981.5" y="91.5" width="923" height="379" fill="#000"/><path d="M1074.5 91.5V470.5M1166.5 91.5V470.5M1258.5 91.5V470.5M1350.5 91.5V470.5M1442.5 91.5V470.5M1534.5 91.5V470.5M1627.5 91.5V470.5M1719.5 91.5V470.5M1811.5 91.5V470.5M981.5 117.5H1904.5M981.5 155.5H1904.5M981.5 193.5H1904.5M981.5 231.5H1904.5M981.5 269.5H1904.5M981.5 307.5H1904.5M981.5 345.5H1904.5M981.5 383.5H1904.5M981.5 421.5H1904.5M981.5 459.5H1904.5" stroke="#666666" stroke-width="1" fill="none"/><path d="M1074.5 91.5v6M1074.5 470.5v-6M1166.5 91.5v6M1166.5 470.5v-6M1258.5 91.5v6M1258.5 470.5v-6M1350.5 91.5v6M1350.5 470.5v-6M1442.5 91.5v6M1442.5 470.5v-6M1534.5 91.5v6M1534.5 470.5v-6M1627.5 91.5v6M1627.5 470.5v-6M1719.5 91.5v6M1719.5 470.5v-6M1811.5 91.5v6M1811.5 470.5v-6M981.5 117.5h10M1904.5 117.5h-10M981.5 155.5h10M1904.5 155.5h-10M981.5 193.5h10M1904.5 193.5h-10M981.5 231.5h10M1904.5 231.5h-10M981.5 269.5h10M1904.5 269.5h-10M981.5 307.5h10M1904.5 307.5h-10M981.5 345.5h10M1904.5 345.5h-10M981.5 383.5h10M1904.5 383.5h-10M981.5 421.5h10M1904.5 421.5h-10M981.5 459.5h10M1904.5 459.5h-10" stroke="#c8c8c8" stroke-width="1" fill="none"/><path d="M981.5 281.5H1904.5" stroke="#e6e66a" stroke-width="1"/><rect x="981.5" y="91.5" width="923" height="379" fill="none" stroke="#afafaf" stroke-width="1"/></svg>
<div class="t" style="left:961.9px;top:110.3px;font-size:10.67px;line-height:15px;color:#afafaf;">320</div>
<div class="t" style="left:961.9px;top:148.3px;font-size:10.67px;line-height:15px;color:#afafaf;">300</div>
<div class="t" style="left:961.9px;top:186.3px;font-size:10.67px;line-height:15px;color:#afafaf;">280</div>
<div class="t" style="left:961.9px;top:224.3px;font-size:10.67px;line-height:15px;color:#afafaf;">260</div>
<div class="t" style="left:961.9px;top:262.3px;font-size:10.67px;line-height:15px;color:#afafaf;">240</div>
<div class="t" style="left:961.9px;top:300.3px;font-size:10.67px;line-height:15px;color:#afafaf;">220</div>
<div class="t" style="left:961.9px;top:338.3px;font-size:10.67px;line-height:15px;color:#afafaf;">200</div>
<div class="t" style="left:961.9px;top:376.3px;font-size:10.67px;line-height:15px;color:#afafaf;">180</div>
<div class="t" style="left:961.9px;top:414.3px;font-size:10.67px;line-height:15px;color:#afafaf;">160</div>
<div class="t" style="left:961.9px;top:452.3px;font-size:10.67px;line-height:15px;color:#afafaf;">140</div>
<div class="t" style="left:978.93px;top:472.8px;font-size:10.67px;line-height:15px;color:#afafaf;">0</div>
<div class="t" style="left:1071.11px;top:472.8px;font-size:10.67px;line-height:15px;color:#afafaf;">1</div>
<div class="t" style="left:1163.29px;top:472.8px;font-size:10.67px;line-height:15px;color:#afafaf;">2</div>
<div class="t" style="left:1255.47px;top:472.8px;font-size:10.67px;line-height:15px;color:#afafaf;">3</div>
<div class="t" style="left:1347.65px;top:472.8px;font-size:10.67px;line-height:15px;color:#afafaf;">4</div>
<div class="t" style="left:1439.83px;top:472.8px;font-size:10.67px;line-height:15px;color:#afafaf;">5</div>
<div class="t" style="left:1532.01px;top:472.8px;font-size:10.67px;line-height:15px;color:#afafaf;">6</div>
<div class="t" style="left:1624.19px;top:472.8px;font-size:10.67px;line-height:15px;color:#afafaf;">7</div>
<div class="t" style="left:1716.37px;top:472.8px;font-size:10.67px;line-height:15px;color:#afafaf;">8</div>
<div class="t" style="left:1808.55px;top:472.8px;font-size:10.67px;line-height:15px;color:#afafaf;">9</div>
<div class="t" style="left:1897.77px;top:472.8px;font-size:10.67px;line-height:15px;color:#afafaf;">10</div>
<svg class="r" style="left:1905px;top:83px;" width="13" height="10" viewBox="0 0 13 10"><rect width="13" height="10" fill="#fff"/><rect x="1.2" y="1" width="10.6" height="1" fill="#222"/><rect x="1.2" y="3" width="10.6" height="6" fill="#111"/><path d="M6.5 4v5M3.800 6.800l2.700-2.800 2.700 2.800" stroke="#fff" stroke-width="1.4" fill="none"/></svg>
<div class="r" style="left:961px;top:493px;width:958px;height:24px;background:#f0f0f0;"></div>
<div class="t" style="left:962.5px;top:498.1px;font-size:11px;line-height:15px;color:#000;letter-spacing:-0.36px;">Ready</div>
<div class="r" style="left:1787px;top:496px;width:76px;height:18px;border-left:1px solid #bababa;border-top:1px solid #bababa;border-right:1px solid #fff;border-bottom:1px solid #fff;box-sizing:border-box;"></div>
<div class="r" style="left:1865px;top:496px;width:53px;height:18px;border-left:1px solid #bababa;border-top:1px solid #bababa;border-right:1px solid #fff;border-bottom:1px solid #fff;box-sizing:border-box;"></div>
<div class="t" style="left:1790.8px;top:498.1px;font-size:11px;line-height:15px;color:#000;letter-spacing:-0.31px;">Sample based</div>
<div class="t" style="left:1868.4px;top:498.1px;font-size:11px;line-height:15px;color:#000;letter-spacing:-0.35px;">T=10.000</div>
<div class="r" style="left:960px;top:516px;width:959px;height:1px;background:#585858;"></div>
<div class="r" style="left:960px;top:517px;width:959px;height:1px;background:#8e8e8e;"></div>
<div class="r" style="left:960px;top:518px;width:959px;height:1px;background:#dcdcdc;"></div>
<div class="r" style="left:959px;top:0px;width:1px;height:1037px;background:#b4b4b4;"></div>
<div class="r" style="left:960px;top:0px;width:1px;height:1037px;background:#505050;"></div>
</section>
</body></html>
